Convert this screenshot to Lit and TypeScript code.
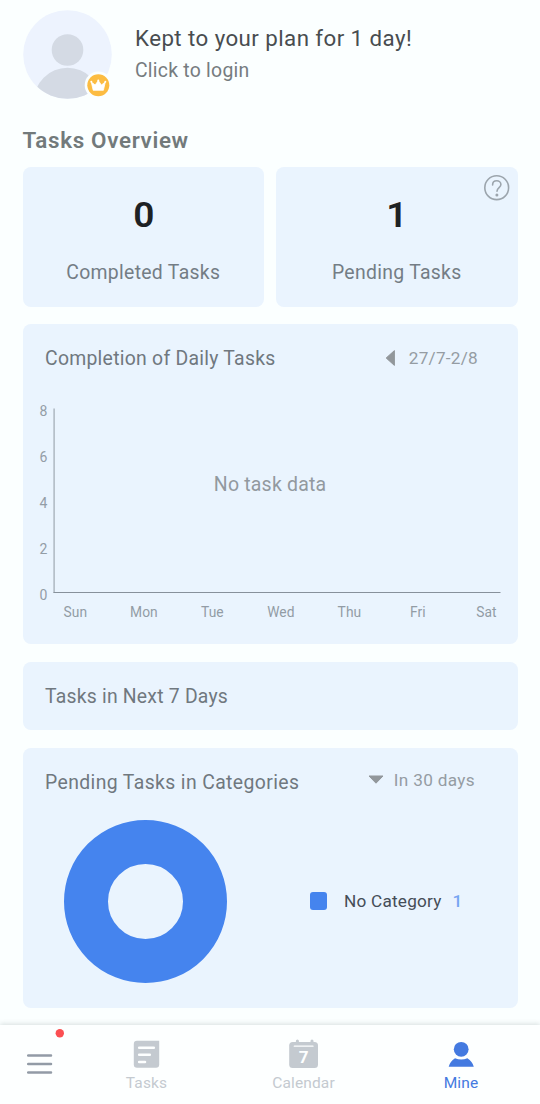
import { LitElement, html, svg, css } from "lit";
import { customElement } from "lit/decorators.js";

const DAYS = ["Sun", "Mon", "Tue", "Wed", "Thu", "Fri", "Sat"];
const TICKS = [8, 6, 4, 2, 0];

@customElement("profile-header")
class ProfileHeader extends LitElement {
  static styles = css`
    :host { display: flex; height: 122px; box-sizing: border-box; padding: 8px 0 0 22px; }
    svg { flex: none; display: block; }
    .who { margin: 15px 0 0 21px; display: flex; flex-direction: column; }
    .plan { font-size: 22.3px; line-height: 31px; color: #484d50; letter-spacing: 0.43px; white-space: nowrap; }
    .login { font-size: 19.4px; line-height: 34px; color: #767c7f; letter-spacing: 0.25px; white-space: nowrap; }
  `;
  render() {
    return html`
      <svg width="92" height="92" viewBox="22 8 92 92">
        <defs><clipPath id="disc"><circle cx="67.5" cy="54.5" r="44.3" /></clipPath></defs>
        <circle cx="67.5" cy="54.5" r="44.3" fill="#edf3fe" />
        <g clip-path="url(#disc)" fill="#d4dae4">
          <circle cx="67.5" cy="50" r="15.8" />
          <circle cx="67.5" cy="101.5" r="33.7" />
        </g>
        <circle cx="98.3" cy="85.2" r="13.6" fill="#fbffff" />
        <circle cx="98.3" cy="85.2" r="11" fill="#fcbc42" />
        <path d="M93.2 90.3 L91.3 82 L95.2 85 L98.3 80.6 L101.4 85 L105.3 82 L103.4 90.3 Z" fill="#fff" stroke="#fff" stroke-width=".8" stroke-linejoin="round" />
        <g fill="#fff"><circle cx="91.3" cy="81.8" r="1" /><circle cx="98.3" cy="80.4" r="1" /><circle cx="105.3" cy="81.8" r="1" /></g>
      </svg>
      <div class="who">
        <div class="plan">Kept to your plan for 1 day!</div>
        <div class="login">Click to login</div>
      </div>
    `;
  }
}

@customElement("daily-chart")
class DailyChart extends LitElement {
  static styles = css`
    :host { display: block; }
    svg { display: block; }
    .tick { font-size: 14px; fill: #939da6; text-anchor: middle; }
    .day { font-size: 13.8px; fill: #929ca5; text-anchor: middle; letter-spacing: 0.05px; }
    .empty { font-size: 19.5px; fill: #92999f; text-anchor: middle; letter-spacing: 0.2px; }
  `;
  render() {
    return html`
      <svg width="495" height="240" viewBox="22.5 394 495 240">
        <path d="M53.6 408.5V593" stroke="#a9b3bc" stroke-width="1.4" />
        <path d="M53 592.5H500" stroke="#87919b" stroke-width="1" />
        ${TICKS.map((t, i) => svg`<text class="tick" x="42.9" y=${416 + i * 46}>${t}</text>`)}
        ${DAYS.map((d, i) => svg`<text class="day" x=${74.9 + i * 68.5} y="616.6">${d}</text>`)}
        <text class="empty" x="269.6" y="490.5">No task data</text>
      </svg>
    `;
  }
}

@customElement("nav-bar")
class NavBar extends LitElement {
  static styles = css`
    :host { display: grid; grid-template-columns: 68px 157px 157px 158px; height: 79px; background: #fdffff; box-shadow: 0 -1px 5px rgba(70, 90, 90, 0.2); }
    .menu { padding: 4px 0 0 27px; }
    svg { display: block; }
    .item { display: flex; flex-direction: column; align-items: center; padding-top: 12px; font-size: 15.5px; line-height: 20px; letter-spacing: 0.15px; color: #c4cad0; }
    .item svg { margin-bottom: 4px; }
    .active { color: #447ae0; }
    .num { font-size: 17px; font-weight: 700; fill: #fdffff; text-anchor: middle; }
  `;
  render() {
    return html`
      <div class="menu">
        <svg width="38" height="48" viewBox="27 1029 38 48">
          <circle cx="59.8" cy="1033.2" r="4.2" fill="#fb4f52" />
          <path d="M28.2 1055.6H51M28.2 1064.1H51M28.2 1072.5H51" stroke="#929ba6" stroke-width="2.5" stroke-linecap="round" />
        </svg>
      </div>
      <div class="item">
        <svg width="32" height="32" viewBox="131 1037 32 32">
          <path d="M137 1040.8H159.2V1064.6Q159.2 1067.8 156 1067.8H137Q133.8 1067.8 133.8 1064.6V1044Q133.8 1040.8 137 1040.8Z" fill="#c4cad0" />
          <path d="M139.2 1047.7H153.8M139.2 1054.8H149.8M139.2 1062H145" stroke="#fdffff" stroke-width="2.6" stroke-linecap="round" />
        </svg>
        Tasks
      </div>
      <div class="item">
        <svg width="32" height="32" viewBox="288 1037 32 32">
          <rect x="289.2" y="1042" width="28.8" height="26" rx="3.5" fill="#c4cad0" />
          <path d="M297.4 1041V1044M312 1041V1044" stroke="#c4cad0" stroke-width="3" stroke-linecap="round" />
          <path d="M294.3 1046.2H313" stroke="#fdffff" stroke-width="1.3" stroke-linecap="round" />
          <text class="num" x="303.6" y="1062.6">7</text>
        </svg>
        Calendar
      </div>
      <div class="item active">
        <svg width="32" height="32" viewBox="445 1037 32 32">
          <circle cx="461.2" cy="1049.3" r="7.4" fill="#447ae0" />
          <path d="M448.7 1066.8Q450 1061.2 455 1058.2Q461.2 1060.6 467.4 1058.2Q472.4 1061.2 473.8 1066.8Z" fill="#447ae0" />
        </svg>
        Mine
      </div>
    `;
  }
}

@customElement("app-root")
class AppRoot extends LitElement {
  static styles = css`
    :host { display: flex; flex-direction: column; width: 540px; height: 1104px; overflow: hidden; background: #fbffff; font-family: Roboto, "Liberation Sans", sans-serif; }
    .page { flex: 1; padding: 0 22.5px; }
    profile-header { margin: 0 -22.5px; }
    nav-bar { flex: none; }
    h2 { margin: 0; height: 45px; line-height: 37px; font-size: 22.4px; font-weight: 600; letter-spacing: 0.66px; color: #727a7b; white-space: nowrap; }
    .card { background: #eaf4fe; border-radius: 8px; margin-bottom: 18px; box-sizing: border-box; }
    .stats { display: grid; grid-template-columns: 1fr 1fr; column-gap: 12px; margin-bottom: 17px; }
    .stat { position: relative; margin: 0; height: 140px; text-align: center; padding-top: 27px; }
    .value { font-size: 35px; line-height: 44px; font-weight: 600; color: #1d2124; transform: scaleX(1.06); }
    .label { margin-top: 21px; font-size: 19.4px; line-height: 28px; color: #747d85; letter-spacing: 0.3px; }
    .help { position: absolute; right: 7px; top: 7px; }
    .daily { height: 320px; padding-top: 20px; }
    .next { height: 68px; padding: 20px 0 0 22.5px; }
    .next .title { display: block; letter-spacing: 0.21px; }
    .cats { height: 260px; margin: 0; padding-top: 20px; }
    .row { display: flex; height: 28px; padding: 0 39.5px 0 22.5px; justify-content: space-between; align-items: center; }
    .row + daily-chart { margin-top: 22px; }
    .title { font-size: 19.4px; line-height: 29px; letter-spacing: 0.26px; color: #70787f; white-space: nowrap; }
    .cats .title { letter-spacing: 0.38px; }
    .pick { display: flex; align-items: center; gap: 12px; font-size: 17.2px; letter-spacing: 0.25px; color: #959ca3; white-space: nowrap; }
    .cats .pick { gap: 10px; margin: 0 3px 4px 0; letter-spacing: 0.32px; }
    .body { display: flex; align-items: center; height: 163px; margin-top: 23.5px; padding-left: 41.5px; }
    .key { width: 17.5px; height: 17.5px; border-radius: 3px; background: #4584ee; margin: 0 17px 0 82.5px; }
    .name { font-size: 17.2px; letter-spacing: 0.22px; color: #454d57; margin: 0 11px 1px 0; }
    .count { font-size: 17.2px; font-weight: 500; color: #76a5f2; margin-bottom: 1px; }
    svg { display: block; }
  `;
  render() {
    return html`
      <div class="page">
        <profile-header></profile-header>
        <h2>Tasks Overview</h2>
        <div class="stats">
          <div class="card stat"><div class="value">0</div><div class="label">Completed Tasks</div></div>
          <div class="card stat">
            <div class="value">1</div><div class="label">Pending Tasks</div>
            <svg class="help" width="28" height="28" viewBox="0 0 28 28" fill="none" stroke="#9ca5ad" stroke-width="1.6" stroke-linecap="round">
              <circle cx="13.7" cy="13.7" r="11.9" />
              <path d="M9.6 10.9C9.6 8.2 11.4 6.7 13.7 6.7S17.9 8.3 17.9 10.6C17.9 13.6 14 13.8 14 17.3" />
              <circle cx="13.9" cy="21" r=".7" fill="#9ca5ad" />
            </svg>
          </div>
        </div>
        <div class="card daily">
          <div class="row">
            <span class="title">Completion of Daily Tasks</span>
            <span class="pick"><svg width="12" height="18"><path d="M1.2 9L9.4 1.6V16.4Z" fill="#92979b" stroke="#92979b" stroke-linejoin="round" /></svg>27/7-2/8</span>
          </div>
          <daily-chart></daily-chart>
        </div>
        <div class="card next"><span class="title">Tasks in Next 7 Days</span></div>
        <div class="card cats">
          <div class="row">
            <span class="title">Pending Tasks in Categories</span>
            <span class="pick"><svg width="16" height="12"><path d="M1 2H15L8 9.2Z" fill="#92979b" stroke="#92979b" stroke-linejoin="round" /></svg>In 30 days</span>
          </div>
          <div class="body">
            <svg width="163" height="163"><circle cx="81.5" cy="81.5" r="59.5" fill="none" stroke="#4584ee" stroke-width="44" /></svg>
            <span class="key"></span><span class="name">No Category</span><span class="count">1</span>
          </div>
        </div>
      </div>
      <nav-bar></nav-bar>
    `;
  }
}
